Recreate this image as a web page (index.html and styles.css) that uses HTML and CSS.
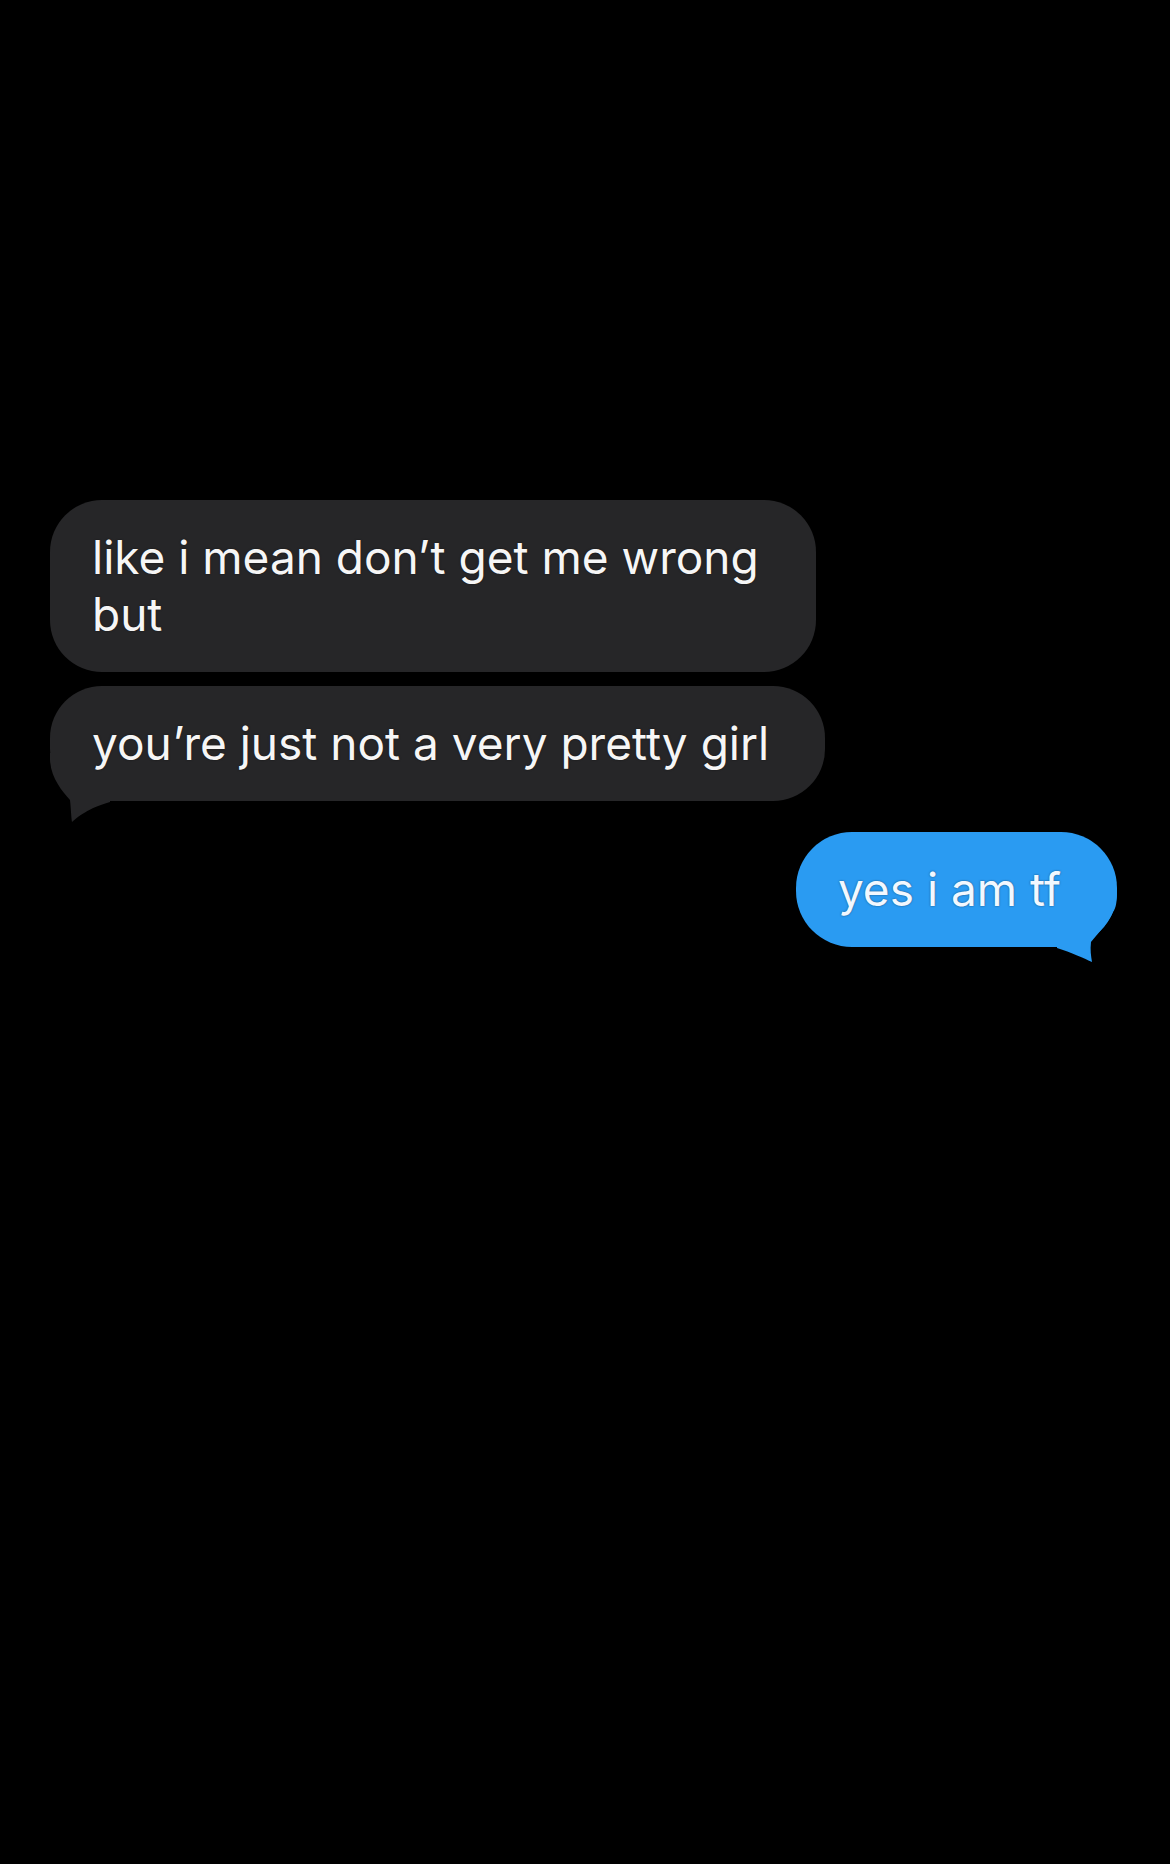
FILE: index.html
```html
<!DOCTYPE html>
<html lang="en">
<head>
<meta charset="utf-8">
<title>Messages</title>
<link rel="stylesheet" href="styles.css">
</head>
<body>
<main class="thread">
  <div class="bubble received first"><span class="text">like i mean don’t get me wrong but</span></div>
  <div class="bubble received last">
    <svg class="tail tail-left" width="60" height="70" viewBox="0 0 60 70"><path d="M0 0 L0 7 C1 25 12 38 20 47 C21 56 21 62 22 69 C28 64 38 55 60 49 L60 0 Z" fill="#262628"/></svg>
    <span class="text">you’re just not a very pretty girl</span>
  </div>
  <div class="bubble sent">
    <svg class="tail tail-right" width="60" height="72" viewBox="0 0 60 72"><path d="M60 0 C60 12 59 18 56 22 C52 32 42 42 34 52 C33 60 34 66 35 72 C28 69 14 62 0 58 L0 0 Z" fill="#2a9bf2"/></svg>
    <span class="text">yes i am tf</span>
  </div>
</main>
</body>
</html>
```
FILE: styles.css
```css
html, body {
  margin: 0;
  background: #000;
}
body {
  width: 1170px;
  height: 1864px;
  overflow: hidden;
}
.thread {
  display: flex;
  flex-direction: column;
  align-items: flex-start;
  padding: 500px 53px 0 50px;
}
.bubble {
  position: relative;
  font-family: Inter, "Noto Sans", sans-serif;
  font-size: 46px;
  line-height: 57px;
  color: #f6f6f6;
  padding: 29px 56px 29px 42px;
  border-radius: 52px;
  max-width: 800px;
  box-sizing: border-box;
  text-shadow: 0 0 2px rgba(0,0,0,0.5);
}
.text {
  position: relative;
  z-index: 1;
}
.received {
  background: #262628;
}
.first {
  max-width: 766px;
  margin-bottom: 14px;
}
.sent {
  align-self: flex-end;
  background: #2a9bf2;
  margin-top: 31px;
  border-radius: 56px;
  color: #f2f8ff;
}
.tail {
  position: absolute;
  z-index: 0;
  pointer-events: none;
}
.tail-left {
  left: 0;
  bottom: -22px;
}
.tail-right {
  right: 0;
  bottom: -15px;
}
```
